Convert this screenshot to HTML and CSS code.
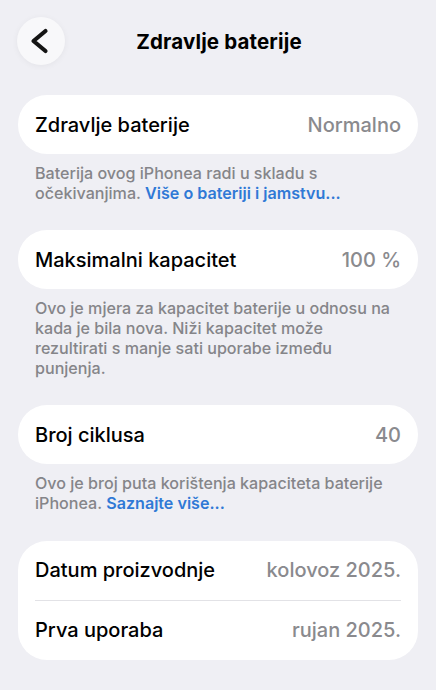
FILE: index.html
```html
<!DOCTYPE html>
<html lang="hr">
<head>
<meta charset="utf-8">
<title>Zdravlje baterije</title>
<link rel="stylesheet" href="styles.css">
</head>
<body>
<div class="screen">
  <header class="nav">
    <button class="back" aria-label="Natrag">
      <svg width="48" height="48" viewBox="0 0 48 48"><path d="M28.5 14 L16.5 24 L28.5 34" fill="none" stroke="#141414" stroke-width="4.2" stroke-linecap="round" stroke-linejoin="round"/></svg>
    </button>
    <h1 class="title">Zdravlje baterije</h1>
  </header>

  <section class="group">
    <div class="card">
      <div class="row"><span class="label">Zdravlje baterije</span><span class="value">Normalno</span></div>
    </div>
    <p class="note">Baterija ovog iPhonea radi u skladu s očekivanjima. <a class="link">Više o bateriji i jamstvu...</a></p>
  </section>

  <section class="group">
    <div class="card">
      <div class="row"><span class="label">Maksimalni kapacitet</span><span class="value">100 %</span></div>
    </div>
    <p class="note">Ovo je mjera za kapacitet baterije u odnosu na kada je bila nova. Niži kapacitet može rezultirati s manje sati uporabe između punjenja.</p>
  </section>

  <section class="group">
    <div class="card">
      <div class="row"><span class="label">Broj ciklusa</span><span class="value">40</span></div>
    </div>
    <p class="note">Ovo je broj puta korištenja kapaciteta baterije iPhonea. <a class="link">Saznajte više...</a></p>
  </section>

  <section class="group">
    <div class="card">
      <div class="row"><span class="label">Datum proizvodnje</span><span class="value">kolovoz 2025.</span></div>
      <div class="sep"></div>
      <div class="row"><span class="label">Prva uporaba</span><span class="value">rujan 2025.</span></div>
    </div>
  </section>
</div>
</body>
</html>
```
FILE: styles.css
```css
* { box-sizing: border-box; }
html, body {
  margin: 0;
  padding: 0;
  background: #efeff4;
}
body {
  font-family: Inter, "Noto Sans", "Liberation Sans", sans-serif;
  color: #000;
  -webkit-font-smoothing: antialiased;
}
.screen {
  width: 436px;
  min-height: 690px;
  padding: 17px 18px 0 18px;
  display: flex;
  flex-direction: column;
}
.nav {
  position: relative;
  height: 48px;
  display: flex;
  align-items: center;
  justify-content: center;
  margin-bottom: 30px;
}
.back {
  position: absolute;
  left: -1px;
  top: 0;
  width: 48px;
  height: 48px;
  border-radius: 50%;
  border: none;
  background: #f8f8fa;
  box-shadow: 0 1px 6px rgba(0,0,0,0.05);
  padding: 0;
  display: block;
}
.back svg { display: block; }
.title {
  margin: 0 0 0 2px;
  font-size: 20.5px;
  font-weight: 700;
  letter-spacing: 0.15px;
}
.group {
  margin-bottom: 27px;
}
.card {
  background: #fff;
  border-radius: 29px;
  padding: 0 17px;
}
.row {
  height: 59px;
  display: flex;
  align-items: center;
  justify-content: space-between;
  font-size: 20px;
  letter-spacing: 0;
}
.label { color: #000; font-weight: 500; }
.value { color: #8a8a8e; font-weight: 500; }
.sep {
  height: 1px;
  background: #e2e2e6;
}
.note {
  margin: 10px 0 0 0;
  padding: 0 22px 0 17px;
  font-size: 16.1px;
  line-height: 19.7px;
  color: #858589;
  font-weight: 500;
  letter-spacing: 0;
}
.link {
  color: #2f79d6;
  font-weight: 600;
}
```
